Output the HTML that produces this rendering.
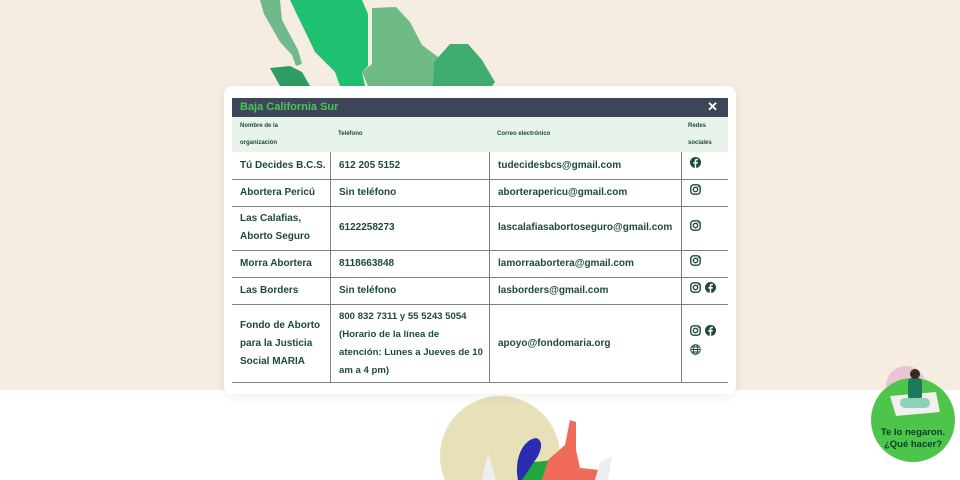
<!DOCTYPE html>
<html><head><meta charset="utf-8"><style>
*{margin:0;padding:0;box-sizing:border-box}
html{width:960px;height:480px;overflow:hidden}
body{width:960px;height:480px;overflow:hidden;position:relative;background:#fff;font-family:"Liberation Sans",sans-serif;font-weight:bold;color:#1d4a38}
.top{position:absolute;left:0;top:0;width:960px;height:390px;background:#f5ece2}
.card{position:absolute;left:224px;top:86px;width:512px;height:308px;background:#fff;border-radius:8px;box-shadow:0 2px 10px rgba(0,0,0,.08)}
.a{position:absolute}
.hd{left:232px;top:98px;width:496px;height:19px;background:#3d4658}
.hd span{position:absolute;left:8px;top:3px;font-size:11px;color:#4cc25a}
.hd i{position:absolute;right:10px;top:1px;font-style:normal;color:#fff;font-size:13px}
.th{left:232px;top:117px;width:496px;height:35px;background:#e8f3ea}
.th div{position:absolute;font-size:6px;line-height:17px;color:#1d4a38}
.hl{position:absolute;left:232px;width:496px;height:1px;background:#7a8580}
.vl{position:absolute;top:152px;height:230px;width:1px;background:#7a8580}
.t{position:absolute;font-size:10px;line-height:18px}
</style></head><body>
<div class="top"></div>
<svg class="a" style="left:250px;top:0" width="260" height="90" viewBox="0 0 260 90">
<path d="M10 0 L30 0 L32 20 L40 35 L48 50 L52 64 L46 66 L42 55 L30 42 L22 28 L14 14 Z" fill="#6fb98a"/>
<path d="M20 68 L40 66 L52 72 L60 86 L30 86 Z" fill="#2e9c64"/>
<path d="M40 0 L112 0 L118 14 L118 66 L112 72 L115 86 L90 86 L85 72 L65 52 Z" fill="#1fc170"/>
<path d="M122 8 L146 7 L160 22 L172 45 L192 60 L184 86 L118 86 L112 72 L122 64 Z" fill="#6fbb86"/>
<path d="M184 62 L200 44 L218 44 L232 60 L245 82 L242 86 L183 86 Z" fill="#3fad6f"/>
</svg>
<svg class="a" style="left:430px;top:390px" width="200" height="90" viewBox="0 0 200 90">
<circle cx="70" cy="66" r="60" fill="#e8e0b8"/>
<path d="M52 90 L58 62 L66 90 Z" fill="#eee"/>
<path d="M88 90 C84 70 92 50 106 48 C114 50 112 62 104 72 L96 90 Z" fill="#2a2db0"/>
<path d="M92 90 L104 72 L124 70 L118 90 Z" fill="#22a83a"/>
<path d="M112 90 L118 70 L135 55 L140 30 L146 32 L146 60 L150 78 L170 80 L165 90 Z" fill="#f06a5a"/>
<path d="M165 90 L170 72 L182 66 L178 90 Z" fill="#eee"/>
</svg>
<svg class="a" style="left:866px;top:362px" width="94" height="104" viewBox="0 0 94 104">
<circle cx="40" cy="24" r="20" fill="#e8c4d4"/>
<circle cx="47" cy="58" r="42" fill="#4cc54a"/>
<path d="M24 34 L70 30 L74 50 L30 54 Z" fill="#f0f0ee"/>
<rect x="42" y="16" width="14" height="22" rx="4" fill="#1c7a5a"/>
<circle cx="49" cy="12" r="5" fill="#3a2a20"/>
<rect x="34" y="36" width="30" height="10" rx="5" fill="#8fd0b8"/>
</svg>
<div style="position:absolute;left:871px;top:427px;width:84px;text-align:center;font-size:9.5px;line-height:12px;color:#0e3a2a">Te lo negaron.<br>¿Qué hacer?</div>

<div class="card"></div>
<div class="a hd"><span>Baja California Sur</span><i>✕</i></div>
<div class="a th">
<div style="left:8px;top:1px">Nombre de la<br>organización</div>
<div style="left:106px;top:9px">Teléfono</div>
<div style="left:265px;top:9px">Correo electrónico</div>
<div style="left:456px;top:1px">Redes<br>sociales</div>
</div>
<div class="hl" style="top:179px"></div><div class="hl" style="top:206px"></div><div class="hl" style="top:250px"></div><div class="hl" style="top:277px"></div><div class="hl" style="top:304px"></div><div class="hl" style="top:382px"></div>
<div class="vl" style="left:330px"></div><div class="vl" style="left:489px"></div><div class="vl" style="left:681px"></div>

<div class="t" style="left:240px;top:157px">Tú Decides B.C.S.</div>
<div class="t" style="left:339px;top:157px">612 205 5152</div>
<div class="t" style="left:498px;top:157px">tudecidesbcs@gmail.com</div>
<div class="t" style="left:240px;top:184px">Abortera Pericú</div>
<div class="t" style="left:339px;top:184px">Sin teléfono</div>
<div class="t" style="left:498px;top:184px">aborterapericu@gmail.com</div>
<div class="t" style="left:240px;top:210px">Las Calafias,<br>Aborto Seguro</div>
<div class="t" style="left:339px;top:219px">6122258273</div>
<div class="t" style="left:498px;top:219px">lascalafiasabortoseguro@gmail.com</div>
<div class="t" style="left:240px;top:255px">Morra Abortera</div>
<div class="t" style="left:339px;top:255px">8118663848</div>
<div class="t" style="left:498px;top:255px">lamorraabortera@gmail.com</div>
<div class="t" style="left:240px;top:282px">Las Borders</div>
<div class="t" style="left:339px;top:282px">Sin teléfono</div>
<div class="t" style="left:498px;top:282px">lasborders@gmail.com</div>
<div class="t" style="left:240px;top:317px">Fondo de Aborto<br>para la Justicia<br>Social MARIA</div>
<div class="t" style="left:339px;top:308px;font-size:9.6px">800 832 7311 y 55 5243 5054<br>(Horario de la línea de<br>atención: Lunes a Jueves de 10<br>am a 4 pm)</div>
<div class="t" style="left:498px;top:335px">apoyo@fondomaria.org</div>

<svg width="0" height="0" style="position:absolute"><defs>
<g id="fb"><circle cx="5.5" cy="5.5" r="5.5" fill="#1d4a38"/><path d="M6.2 11V6.6H7.6L7.8 5H6.2V4.1C6.2 3.6 6.4 3.3 7 3.3H7.9V1.9C7.6 1.9 7.1 1.8 6.6 1.8 5.4 1.8 4.7 2.5 4.7 3.8V5H3.3V6.6H4.7V11Z" fill="#fff"/></g>
<g id="ig"><rect x="0.8" y="0.8" width="9.4" height="9.4" rx="2.8" fill="none" stroke="#1d4a38" stroke-width="1.4"/><circle cx="5.5" cy="5.5" r="2.2" fill="none" stroke="#1d4a38" stroke-width="1.3"/><circle cx="8.2" cy="2.8" r=".7" fill="#1d4a38"/></g>
<g id="gl" fill="none" stroke="#1d4a38" stroke-width=".9"><circle cx="5.5" cy="5.5" r="4.8"/><ellipse cx="5.5" cy="5.5" rx="2" ry="4.8"/><path d="M.7 5.5H10.3M1.5 3H9.5M1.5 8H9.5"/></g>
</defs></svg>
<svg class="a" style="left:690px;top:157px" width="11" height="11"><use href="#fb"/></svg>
<svg class="a" style="left:690px;top:184px" width="11" height="11"><use href="#ig"/></svg>
<svg class="a" style="left:690px;top:220px" width="11" height="11"><use href="#ig"/></svg>
<svg class="a" style="left:690px;top:255px" width="11" height="11"><use href="#ig"/></svg>
<svg class="a" style="left:690px;top:282px" width="11" height="11"><use href="#ig"/></svg>
<svg class="a" style="left:705px;top:282px" width="11" height="11"><use href="#fb"/></svg>
<svg class="a" style="left:690px;top:325px" width="11" height="11"><use href="#ig"/></svg>
<svg class="a" style="left:705px;top:325px" width="11" height="11"><use href="#fb"/></svg>
<svg class="a" style="left:690px;top:344px" width="11" height="11"><use href="#gl"/></svg>
</body></html>
